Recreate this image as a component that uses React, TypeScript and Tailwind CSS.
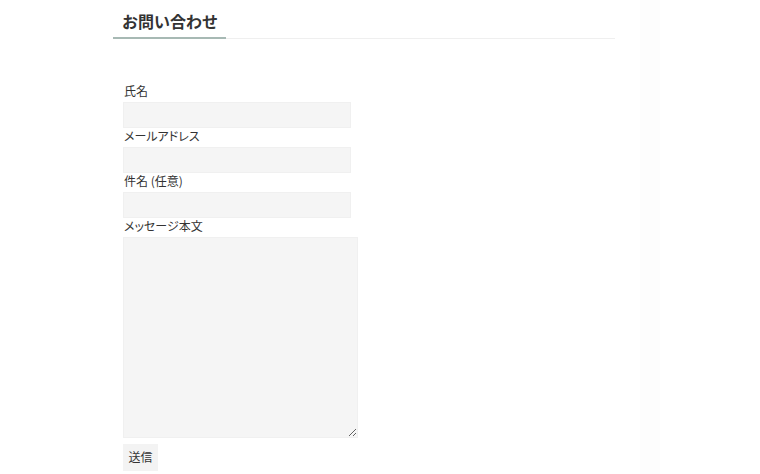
const jp = { fontFamily: '"Noto Sans CJK JP", "Noto Sans", sans-serif' };

function Field({ label, children }: { label: string; children: React.ReactNode }) {
  return (
    <div className="flex flex-col">
      <label className="h-[19px] pl-px text-[12px] leading-[16px] text-[#333] [font-feature-settings:'palt']">
        {label}
      </label>
      {children}
    </div>
  );
}

function TextInput() {
  return (
    <input
      type="text"
      className="h-[26px] w-[228px] border border-[#f0f0f0] bg-[#f5f5f5] px-2 text-[12px] outline-none"
    />
  );
}

export default function App() {
  return (
    <div className="relative min-h-[474px] w-[760px] bg-white" style={jp}>
      <div className="absolute inset-y-0 left-[640px] w-[20px] bg-[#fdfdfd]" />
      <div className="relative ml-[113px] w-[502px]">
        <div className="relative border-b border-[#efefef] pb-[6px] pl-[9px] pt-[10px]">
          <h1 className="text-[16px] font-bold leading-[22px] text-[#333]">お問い合わせ</h1>
          <div className="absolute bottom-[-1px] left-0 h-[2px] w-[113px] bg-[#a7b9b4]" />
        </div>
        <form className="flex flex-col pl-[10px] pt-[44px]">
          <Field label="氏名">
            <TextInput />
          </Field>
          <Field label="メールアドレス">
            <TextInput />
          </Field>
          <Field label="件名 (任意)">
            <TextInput />
          </Field>
          <Field label="メッセージ本文">
            <textarea className="h-[201px] w-[235px] border border-[#f0f0f0] bg-[#f5f5f5] p-1 text-[12px] outline-none" />
          </Field>
          <div className="pt-[5px]">
            <button
              type="button"
              className="h-[27px] w-[35px] bg-[#f3f3f3] text-[12px] text-[#333]"
            >
              送信
            </button>
          </div>
        </form>
      </div>
    </div>
  );
}
